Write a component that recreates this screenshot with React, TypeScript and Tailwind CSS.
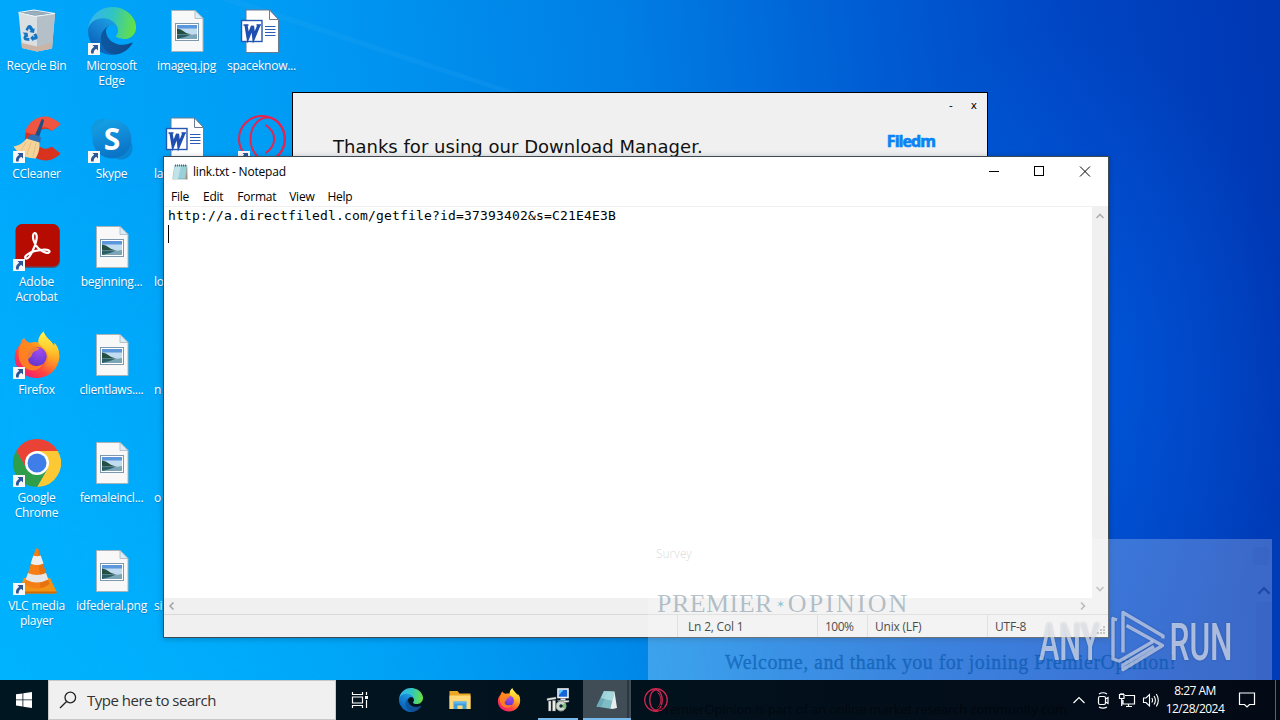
import React from "react";

type IconProps = { className?: string };

const ui = "font-['Open_Sans','Noto_Sans',sans-serif]";

function EdgeIcon({ className = "size-12" }: IconProps) {
  return (
    <svg viewBox="0 0 256 256" className={className}>
      <defs>
        <linearGradient id="edgeA" x1="60" y1="178" x2="240" y2="178" gradientUnits="userSpaceOnUse">
          <stop offset="0" stopColor="#0c59a4" />
          <stop offset="1" stopColor="#114a8b" />
        </linearGradient>
        <linearGradient id="edgeB" x1="150" y1="90" x2="45" y2="225" gradientUnits="userSpaceOnUse">
          <stop offset="0" stopColor="#1b9de2" />
          <stop offset="0.5" stopColor="#1580d0" />
          <stop offset="1" stopColor="#0a62b8" />
        </linearGradient>
        <linearGradient id="edgeC" x1="10" y1="70" x2="250" y2="120" gradientUnits="userSpaceOnUse">
          <stop offset="0" stopColor="#35b6ec" />
          <stop offset="0.45" stopColor="#2fc4c4" />
          <stop offset="1" stopColor="#66e23f" />
        </linearGradient>
      </defs>
      <path fill="url(#edgeA)" d="M231 190.5c-3.4 1.8-6.9 3.4-10.5 4.7a101.9 101.9 0 0 1-35.9 6.5c-47.3 0-88.5-32.5-88.5-74.3 0-11.4 6.4-21.9 16.4-27.3-42.8 1.8-53.8 46.4-53.8 72.5 0 73.9 68.1 81.4 82.8 81.4 7.9 0 19.8-2.3 27-4.6l1.3-.4a128.3 128.3 0 0 0 66.6-52.8 4 4 0 0 0-5.4-5.7z" />
      <path fill="url(#edgeB)" d="M105.7 241.4a79.2 79.2 0 0 1-22.7-21.3 80.7 80.7 0 0 1 29.5-120c3.2-1.5 8.5-4.1 15.6-4a32.4 32.4 0 0 1 25.7 13 31.9 31.9 0 0 1 6.3 18.7c0-.2 24.5-79.6-80-79.6-43.9 0-80 41.6-80 78.2a130.2 130.2 0 0 0 12.1 56 128 128 0 0 0 156.4 67.1 75.6 75.6 0 0 1-62.8-8z" />
      <path fill="url(#edgeC)" d="M152.3 148.9c-.9 1-3.4 2.5-3.4 5.6 0 2.6 1.7 5.2 4.8 7.3 14.4 10.1 41.7 8.8 41.8 8.8a59.6 59.6 0 0 0 30.3-8.4 61.4 61.4 0 0 0 30.4-52.9c.3-22.4-8-37.3-11.3-43.9C223.5 23.9 177.2 0 128 0A128 128 0 0 0 0 126.2c.5-36.5 36.8-66 80-66 3.5 0 23.5.3 42 10 16.3 8.6 24.9 18.9 30.8 29.2 6.2 10.7 7.3 24.1 7.3 29.5 0 5.3-2.7 13.3-7.8 19.9z" />
    </svg>
  );
}

function RecycleBinIcon() {
  return (
    <svg viewBox="0 0 48 48" className="size-12">
      <path d="M5.500 5.500 21 9.300 42 6.500 39 41.500 24 44.500 9 41z" fill="#dadfe2" />
      <path d="M24 9 42 6.500 39 41.500 24 44.500z" fill="#b5bfc8" />
      <path d="M8.700 36 24 39.500 39.300 36 39 41.500 24 44.500 9 41z" fill="#cbb3a5" />
      <path d="M5.500 5.500 21 3 42 6.500 22 9.300z" fill="#7c99ab" stroke="#eef5f9" strokeWidth="1.200" />
      <path d="M9 5.800 21 4.200 37 6.500 22 8z" fill="#9aaebb" />
      <g fill="#1374c4">
        <path d="M12.500 22.500l2-3.500q1.500-1.800 3.600-.6l2.400 3.600 1.300-.8-.8 4.800-4.800-1 1.500-1-1.700-2.500-1.700 2.700z" />
        <path d="M20.500 27.500l2.700-1.300 1.300 3q.8 3-2.200 3.500l-2 .1v1.700l-3.200-3.500 3.200-3v1.700h1.500z" />
        <path d="M9.700 25.500l4.800.3.800 4.500-1.300-.7-.7 1.200 3 .2v3l-3.500-.5q-3-1-2.100-3.800l.9-2z" />
      </g>
    </svg>
  );
}

function CCleanerIcon() {
  return (
    <svg viewBox="0 0 48 48" className="size-12">
      <path d="M47.500 9.500A20.500 21.500 0 1 0 47.500 38.500L38.500 31.500A9.500 10 0 1 1 38.500 16z" fill="#d9331f" />
      <path d="M47.500 9.500A20.500 21.500 0 0 0 12 17l10 3A9.500 10 0 0 1 38.500 16z" fill="#ef5541" />
      <path d="M28.500 4.500q2.200-.8 2.500 1.200L25.500 24l-4.500-1z" fill="#1f4f86" />
      <path d="M16 20.500q6-2.500 12 2l-1 6-13-3z" fill="#2b70b5" />
      <path d="M13.500 23.500 26.500 27.500Q27 37 22.500 43.500 12 43 6 38.500L.5 31.500Q9 30 13.500 23.500z" fill="#f4d49b" />
      <path d="M13 27 8 36M18 27l-4 13M23 28l-3 14" stroke="#e0b878" strokeWidth=".7" />
    </svg>
  );
}

function SkypeIcon() {
  return (
    <svg viewBox="0 0 48 48" className="size-12">
      <defs>
        <linearGradient id="skype" x1="0" y1="0" x2="0.300" y2="1">
          <stop offset="0" stopColor="#12a5e6" />
          <stop offset="0.450" stopColor="#128fdb" />
          <stop offset="1" stopColor="#0a74c6" />
        </linearGradient>
      </defs>
      <circle cx="14.500" cy="15.500" r="11.500" fill="#1198de" />
      <circle cx="33" cy="33" r="11.500" fill="#0a85d4" />
      <circle cx="24" cy="24" r="19.500" fill="url(#skype)" />
      <text x="24" y="34.500" textAnchor="middle" fontSize="30" fontWeight="700" fill="#fff" fontFamily="Open Sans">S</text>
    </svg>
  );
}

function AcrobatIcon() {
  return (
    <svg viewBox="0 0 48 48" className="size-12">
      <rect x="3" y="2" width="44" height="43" rx="6.500" fill="#7d2420" opacity=".6" />
      <rect x="2.500" y="1" width="44" height="42.500" rx="6.500" fill="#b60b00" />
      <path d="M13 35.500c-3-1.500 2.500-6 9-7.500 6.500-1.600 14-2.300 14.500.2.500 3-6.500 1.800-11.500-3.200-4-4-6-11-4.500-14 1.500-2.600 4 0 3 5.500C22.500 23.500 16 37 13 35.500z" fill="none" stroke="#fff" strokeWidth="2.200" strokeLinejoin="round" />
    </svg>
  );
}

function FirefoxIcon({ className = "size-12" }: IconProps) {
  return (
    <svg viewBox="0 0 48 48" className={className}>
      <defs>
        <linearGradient id="ffBody" x1="0.850" y1="0.100" x2="0.200" y2="0.950">
          <stop offset="0" stopColor="#ffe226" />
          <stop offset="0.350" stopColor="#ff9a1f" />
          <stop offset="0.700" stopColor="#ff4541" />
          <stop offset="1" stopColor="#f01c74" />
        </linearGradient>
        <linearGradient id="ffTail" x1="0.500" y1="0" x2="0.500" y2="1">
          <stop offset="0" stopColor="#fff44f" />
          <stop offset="0.500" stopColor="#ffc42a" />
          <stop offset="1" stopColor="#ff7a2a" stopOpacity="0" />
        </linearGradient>
        <radialGradient id="ffGlobe" cx="0.600" cy="0.200" r="0.900">
          <stop offset="0" stopColor="#a04bf0" />
          <stop offset="1" stopColor="#5b35c8" />
        </radialGradient>
      </defs>
      <path d="M30.500.500c-3 3-5.500 6.500-4.500 11-3-.8-6-.8-8.500.2-3-.3-5-2-6.500-4.700C8.500 8.700 7.500 11 7.600 13.200 3.500 17 1.500 21.500 1.700 27 2.200 38.500 12 47 24 47s22-9.500 22.300-21.500c.1-5.500-1.800-10.800-5-13.500l.3 3.500C38.500 9.500 32.500 7 30.500.5z" fill="url(#ffBody)" />
      <path d="M30.500.500c-3.500 4-7.500 9.500-3.500 13.500 6 4.500 9.500 9 8 15-1.500 7-7 10-13 10 12 5 23-2 24.200-13 .2-5.500-1.700-11-4.900-14l.3 3.500C38.500 9.500 32.500 7 30.500.5z" fill="url(#ffTail)" />
      <circle cx="24" cy="25.500" r="9.700" fill="url(#ffGlobe)" />
      <path d="M7.600 13.200c4-2 8-2 10.700.2 2.500 2 6 2.600 8.200 3.600-1 2.500-5 3-6.500 4.500-1.200 1.300-.5 3.500-3 5-2.500 1.300-2.500 4.300 0 6.500 3 3 9 2.500 12 .5C27 39 20 41 14 38 5.500 34 3.500 22 7.600 13.200z" fill="#ff8a1c" opacity=".85" />
    </svg>
  );
}

function ChromeIcon() {
  return (
    <svg viewBox="0 0 48 48" className="size-12">
      <path d="M3.200 12A24 24 0 0 1 44.800 12H24L13.600 30z" fill="#ea4335" />
      <path d="M44.800 12A24 24 0 0 1 24 48L34.400 30 24 12z" fill="#fcc934" />
      <path d="M24 48A24 24 0 0 1 3.200 12L13.600 30h20.800z" fill="#2f9e4b" />
      <circle cx="24" cy="24" r="12" fill="#fff" />
      <circle cx="24" cy="24" r="9.500" fill="#3f7ee8" />
    </svg>
  );
}

function VlcIcon() {
  return (
    <svg viewBox="0 0 48 48" className="size-12">
      <path d="M11 31h26l6.500 13.500q.5 2-1.500 2H7q-2 0-1.500-2z" fill="#f39316" />
      <path d="M5.300 44.500h38.300q.5 2-1.600 2H7q-2.200 0-1.700-2z" fill="#cf6a05" />
      <path d="M22.500 2.500q1.500-2.500 3 0L36.500 37q-12 9-25 0z" fill="#f57f14" />
      <path d="M25 1.500 36.500 37q-4 3-9 4z" fill="#d9630a" opacity=".5" />
      <path d="M20.300 8.500q3.700 1.600 7.400 0L30.500 16.500q-6.500 3-12.800 0z" fill="#efefef" />
      <path d="M15 26q9 4 18 0l2.300 6.500q-11.500 6-22.700 0z" fill="#e6e6e6" />
    </svg>
  );
}

function OperaIcon({ className = "size-12" }: IconProps) {
  return (
    <svg viewBox="0 0 48 48" className={className} fill="none" stroke="#ef2a5a">
      <circle cx="24" cy="24" r="22.500" strokeWidth="2.600" />
      <ellipse cx="24" cy="24" rx="12.500" ry="20.500" strokeWidth="2.800" />
      <path d="M27 9C36 16 36 32 27 39" strokeWidth="2" />
    </svg>
  );
}

function OperaDesktopIcon() {
  return (
    <svg viewBox="0 0 48 48" className="size-12" fill="none" stroke="#e5244f">
      <circle cx="24" cy="24" r="23" strokeWidth="2" />
      <ellipse cx="29.500" cy="24" rx="17" ry="21.500" strokeWidth="1.900" />
      <path d="M27.500 10C39 17 39 31 27.500 38" strokeWidth="2" />
    </svg>
  );
}

function ImageFileIcon() {
  return (
    <svg viewBox="0 0 48 48" className="size-12">
      <path d="M8.500 3.500h23.500l8 8v33H8.500z" fill="#f8f8f8" stroke="#a9b4ba" />
      <path d="M32 3.500v8h8z" fill="#d9eef8" stroke="#a9b4ba" strokeWidth=".8" />
      <rect x="12.500" y="16.500" width="23" height="17" fill="#fff" stroke="#7e98ad" />
      <rect x="14" y="18" width="20" height="5" fill="#5b97dc" />
      <rect x="14" y="21.500" width="20" height="5.500" fill="#c1dcf1" />
      <path d="M14 21.500q4 .5 7 3t9 3H14z" fill="#244f42" />
      <path d="M14 27q9 1 20 0v5H14z" fill="#7ba6b8" />
      <path d="M14 27.500h14l-6 2.500-8 2z" fill="#2d5d64" />
    </svg>
  );
}

function WordFileIcon() {
  return (
    <svg viewBox="0 0 48 48" className="size-12">
      <path d="M8 3h23.500l9 9.500V45.500H8z" fill="#fff" stroke="#6b7b8f" />
      <path d="M31.500 3v9.500h9z" fill="#fff" stroke="#6b7b8f" />
      <path d="M27 19.500h10.500M27 22.500h10.500M27 25.500h10.500M27 28.500h10.500" stroke="#2b5db8" />
      <rect x="3.500" y="13.500" width="20.500" height="21" fill="#fff" stroke="#2458b5" strokeWidth="1.400" />
      <path d="M8 18l2 12.500L14.500 19l1.300 11.500L21 18" fill="none" stroke="#1f4fb0" strokeWidth="3.200" />
      <path d="M5.500 18h5M18.500 18h4.500" stroke="#1f4fb0" strokeWidth="1.500" />
    </svg>
  );
}

function NotepadIcon({ className = "size-4" }: IconProps) {
  return (
    <svg viewBox="0 0 16 16" className={className}>
      <path d="M2.800 1.500h12L13.800 15H.8z" fill="#9bd0d8" stroke="#6f98a3" strokeWidth=".6" />
      <path d="M2.800 1.500H9L6 15H.8z" fill="#bfe3e8" />
      <path d="M13.500 15.500H15.500L15.300 2" fill="#a08c78" />
      <path d="M3.500 .5v2M5.500 .5v2M7.500 .5v2M9.500 .5v2M11.500 .5v2M13.500 .5v2" stroke="#4d6268" strokeWidth="1" />
    </svg>
  );
}

function ShortcutBadge() {
  return (
    <svg viewBox="0 0 12 12" className="absolute bottom-0 left-0 size-3">
      <rect width="12" height="12" fill="#f7f7f7" />
      <path d="M4.500 2h5.500v5.500L8.200 5.700Q5.300 7.500 5.700 10.500H3.200Q2 6.500 6.200 3.700z" fill="#2b5797" />
    </svg>
  );
}

type Item = { icon: React.ReactNode; label: string[]; shortcut?: boolean; cut?: boolean };

const image = <ImageFileIcon />;
const word = <WordFileIcon />;

const columns: (Item | null)[][] = [
  [
    { icon: <RecycleBinIcon />, label: ["Recycle Bin"] },
    { icon: <CCleanerIcon />, label: ["CCleaner"], shortcut: true },
    { icon: <AcrobatIcon />, label: ["Adobe", "Acrobat"], shortcut: true },
    { icon: <FirefoxIcon />, label: ["Firefox"], shortcut: true },
    { icon: <ChromeIcon />, label: ["Google", "Chrome"], shortcut: true },
    { icon: <VlcIcon />, label: ["VLC media", "player"], shortcut: true },
  ],
  [
    { icon: <EdgeIcon />, label: ["Microsoft", "Edge"], shortcut: true },
    { icon: <SkypeIcon />, label: ["Skype"], shortcut: true },
    { icon: image, label: ["beginning..."] },
    { icon: image, label: ["clientlaws...."] },
    { icon: image, label: ["femaleincl..."] },
    { icon: image, label: ["idfederal.png"] },
  ],
  [
    { icon: image, label: ["imageq.jpg"] },
    { icon: word, label: ["la"], cut: true },
    { icon: null, label: ["lo"], cut: true },
    { icon: null, label: ["n"], cut: true },
    { icon: null, label: ["o"], cut: true },
    { icon: null, label: ["si"], cut: true },
  ],
  [
    { icon: word, label: ["spaceknow..."] },
    { icon: <OperaDesktopIcon />, label: [], shortcut: true },
  ],
];

function DesktopIcon({ item }: { item: Item }) {
  return (
    <div className="flex h-[108px] w-[75px] flex-col items-center pt-[7px] pr-[2px]">
      <div className="relative size-12 shrink-0">
        {item.icon}
        {item.shortcut && <ShortcutBadge />}
      </div>
      <div className={`mt-[3px] w-full text-[12px] leading-[15px] tracking-[-0.250px] whitespace-nowrap text-white [text-shadow:0_1px_1px_rgb(0_40_90/0.35)] ${item.cut ? "pl-[4px] text-left" : "flex flex-col items-center"}`}>
        {item.label.map((line) => (
          <div key={line}>{line}</div>
        ))}
      </div>
    </div>
  );
}

function Wallpaper() {
  return (
    <svg viewBox="0 0 1280 720" className="absolute inset-0 h-[720px] w-[1280px]">
      <defs>
        <linearGradient id="sky" x1="0" y1="240" x2="1280" y2="100" gradientUnits="userSpaceOnUse">
          <stop offset="0" stopColor="#00a9fc" />
          <stop offset="0.220" stopColor="#009df5" />
          <stop offset="0.500" stopColor="#007ee4" />
          <stop offset="0.680" stopColor="#005ed4" />
          <stop offset="0.840" stopColor="#0046c4" />
          <stop offset="1" stopColor="#0037b3" />
        </linearGradient>
        <linearGradient id="lift" x1="0" y1="0" x2="0" y2="1">
          <stop offset="0.200" stopColor="#00b8ff" stopOpacity="0" />
          <stop offset="1" stopColor="#00b8ff" stopOpacity="0.700" />
        </linearGradient>
        <linearGradient id="fade" x1="0" y1="0" x2="1" y2="0">
          <stop offset="0" stopColor="#fff" />
          <stop offset="0.600" stopColor="#000" />
        </linearGradient>
        <radialGradient id="glow" cx="1060" cy="370" r="230" gradientTransform="translate(0 -180) scale(1 1.500)" gradientUnits="userSpaceOnUse">
          <stop offset="0" stopColor="#0062ea" stopOpacity="0.600" />
          <stop offset="1" stopColor="#0062ea" stopOpacity="0" />
        </radialGradient>
        <mask id="leftHalf">
          <rect width="1280" height="720" fill="url(#fade)" />
        </mask>
      </defs>
      <rect width="1280" height="720" fill="url(#sky)" />
      <rect width="1280" height="720" fill="url(#lift)" mask="url(#leftHalf)" />
      <rect width="1280" height="720" fill="url(#glow)" />
      <path d="M240 0 520 93H505L220 0z" fill="#3fb4f7" opacity=".12" />
    </svg>
  );
}

function DownloadManager() {
  return (
    <section className="absolute top-[92px] left-[292px] flex h-[120px] w-[696px] flex-col border border-black bg-[#f0f0f0] font-['DejaVu_Sans',sans-serif] text-black">
      <div className="flex h-[26px] items-center justify-end gap-[17px] pr-[10px] text-[10.500px]">
        <span className="pr-px">-</span>
        <span>x</span>
      </div>
      <div className="flex items-start justify-between pr-[52px] pl-[40px]">
        <h1 className="mt-[15px] text-[18px] leading-[26px] tracking-[0.020px] whitespace-nowrap text-[#111]">Thanks for using our Download Manager.</h1>
        <span className="mt-[12px] font-['Open_Sans',sans-serif] text-[16px] leading-[20px] font-bold tracking-[-0.950px] text-[#0a84f5] [-webkit-text-stroke:0.7px_#0a84f5]">Filedm</span>
      </div>
    </section>
  );
}

function Chevron({ d, className }: { d: string; className: string }) {
  return (
    <svg viewBox="0 0 10 10" className={className} fill="none" stroke="currentColor" strokeWidth="1.600">
      <path d={d} />
    </svg>
  );
}

function Notepad() {
  return (
    <section className={`absolute top-[156px] left-[163px] flex h-[482px] w-[946px] flex-col border border-[#3b4a55] bg-white text-[12px] text-black shadow-[0_1px_6px_rgb(0_0_0/0.25)] ${ui}`}>
      <header className="flex h-[29px] shrink-0 items-center pl-[8px]">
        <NotepadIcon />
        <span className="ml-[5px] grow text-[12px] tracking-[-0.200px]">link.txt - Notepad</span>
        <svg viewBox="0 0 136 28" className="h-7 w-[136px]" fill="none" stroke="#000" shapeRendering="crispEdges">
          <path d="M17 13.500h10" />
          <rect x="62.500" y="8.500" width="9" height="9" />
          <path d="M108 8.500l10 10M118 8.500l-10 10" shapeRendering="auto" />
        </svg>
      </header>
      <nav className="flex h-[21px] shrink-0 items-center gap-[14px] border-b border-[#f0f0f0] pt-[2px] pl-[7px] tracking-[-0.250px]">
        <span>File</span>
        <span>Edit</span>
        <span>Format</span>
        <span className="-ml-px">View</span>
        <span className="-ml-px">Help</span>
      </nav>
      <div className="flex grow">
        <div className="grow pl-[4px] font-['DejaVu_Sans_Mono',monospace] text-[13px] leading-[18px] tracking-[0.173px] whitespace-pre">
          http://a.directfiledl.com/getfile?id=37393402&amp;s=C21E4E3B
          <div className="ml-0 h-[18px] w-px bg-black" />
        </div>
        <div className="flex w-[16px] flex-col items-center justify-between bg-[#f0f0f0] py-[4px] text-[#b0b0b0]">
          <Chevron d="M1.500 7 5 3.500 8.500 7" className="size-[10px]" />
          <Chevron d="M1.500 3 5 6.500 8.500 3" className="size-[10px]" />
        </div>
      </div>
      <div className="flex h-[16px] shrink-0 items-center justify-between bg-[#f0f0f0] pr-[20px] pl-[3px] text-[#a5a5a5]">
        <Chevron d="M6.500 1.500 3 5 6.500 8.500" className="size-[10px]" />
        <Chevron d="M3 1.500 6.500 5 3 8.500" className="size-[10px]" />
      </div>
      <footer className="flex h-[23px] shrink-0 items-stretch border-t border-[#d9d9d9] bg-[#f0f0f0] leading-[23px] tracking-[-0.200px] text-[#111]">
        <div className="grow" />
        <div className="w-[140px] border-l border-[#d7d7d7] pl-[10px]">Ln 2, Col 1</div>
        <div className="w-[50px] border-l border-[#d7d7d7] pl-[7px] tracking-[-0.500px]">100%</div>
        <div className="w-[120px] border-l border-[#d7d7d7] pl-[7px]">Unix (LF)</div>
        <div className="flex w-[121px] items-start justify-between border-l border-[#d7d7d7] pr-[2px] pl-[7px]">
          <span>UTF-8</span>
          <svg viewBox="0 0 10 10" className="mb-[2px] size-[10px] self-end" fill="#b5b5b5">
            <path d="M7 1h2v2H7zM4 4h2v2H4zM7 4h2v2H7zM1 7h2v2H1zM4 7h2v2H4zM7 7h2v2H7z" />
          </svg>
        </div>
      </footer>
    </section>
  );
}

function SurveyGhost() {
  return (
    <section className="absolute top-[539px] left-[648px] flex h-[141px] w-[624px] overflow-hidden bg-white/23">
      <div className="flex grow flex-col pl-[8px]">
        <span className={`mt-[6px] text-[12px] leading-[18px] tracking-[-0.300px] text-black/12 ${ui}`}>Survey</span>
        <div className="mt-[26px] flex items-center pl-px font-['Liberation_Serif',serif] text-[26px] leading-[30px] whitespace-nowrap text-[#33566b]/35">
          <span className="tracking-[0.450px]">PREMIER</span>
          <span className="mx-[3px] text-[11px] text-[#2a9fc4]/50">✶</span>
          <span className="tracking-[2.100px]">OPINION</span>
        </div>
        <p className="mt-[29px] pl-[69px] font-['Liberation_Serif',serif] text-[20px] leading-[28px] tracking-[0.450px] whitespace-nowrap text-[#0053a8]/55 [-webkit-text-stroke:0.4px_rgb(0_83_168/0.5)]">
          Welcome, and thank you for joining PremierOpinion!
        </p>
      </div>
      <div className="flex w-[16px] flex-col items-center pt-[45px] text-[#10309a]/60">
        <Chevron d="M1 7 5 3 9 7" className="size-[14px]" />
        <div className="mt-[4px] w-full grow bg-[#2b50b8]/15" />
      </div>
      <div className="absolute top-[8px] right-[3px] h-[18px] w-[16px] rounded-sm bg-[#2b50b8]/15" />
    </section>
  );
}

function Watermark() {
  return (
    <svg viewBox="0 0 200 70" className="absolute top-[605px] left-[1036px] h-[70px] w-[200px] drop-shadow-[0_0_1px_rgb(0_0_0/0.3)]">
      <g fill="#e6ebf5" fillOpacity=".68" fontFamily="Roboto" fontSize="51" fontWeight="500">
        <text x="3" y="54.500" textLength="60.500" lengthAdjust="spacingAndGlyphs">ANY</text>
        <text x="133.500" y="54.500" textLength="63" lengthAdjust="spacingAndGlyphs">RUN</text>
      </g>
      <g fill="none" stroke="#ccd6ee" strokeOpacity=".72" strokeWidth="3.400" strokeLinejoin="round">
        <path d="M87 47.500V7.500L127 31V33.500" />
        <path d="M90.500 20.500 126.500 40.500 87 64.500V60L118 41.500" />
        <path d="M81 15 77 13.500V54L83 56 87 54 117 36.500" />
      </g>
    </svg>
  );
}

function TaskButton({ children, running, active }: { children: React.ReactNode; running?: boolean; active?: boolean }) {
  return (
    <div className={`relative mr-px flex w-12 shrink-0 items-center justify-center ${active ? "bg-[#404d56]" : ""}`}>
      {children}
      {active && <div className="absolute inset-y-0 right-[2px] w-[2px] bg-[#2b3841]" />}
      {running && <div className={`absolute bottom-0 h-[2px] bg-[#76b9ed] ${active ? "left-0 w-12" : "left-[4px] w-10"}`} />}
    </div>
  );
}

function Taskbar() {
  return (
    <footer className={`absolute bottom-0 left-0 flex h-[40px] w-[1280px] bg-linear-to-r from-[#001722] via-[#02121d] to-[#030a16] text-white ${ui}`}>
      <div className="flex w-12 items-center justify-center">
        <svg viewBox="0 0 16 16" className="size-4" fill="#fff">
          <path d="M0 2.300 6.500 1.400V7.500H0zM7.300 1.300 16 0V7.500H7.300zM0 8.300H6.500V14.500L0 13.600zM7.300 8.300H16V16L7.300 14.700z" />
        </svg>
      </div>
      <div className="flex w-[288px] items-center border border-[#c8c8c8] bg-[#f0f0f0] pl-[10px] text-[#333]">
        <svg viewBox="0 0 18 18" className="size-[18px]" fill="none" stroke="#222" strokeWidth="1.300">
          <circle cx="11.300" cy="6.500" r="5.300" />
          <path d="M7.600 10.500 1 17" />
        </svg>
        <span className="ml-[10px] text-[15px] tracking-[-0.480px]">Type here to search</span>
      </div>
      <TaskButton>
        <svg viewBox="0 0 18 18" className="size-[18px]" fill="none" stroke="#fff" strokeWidth="1.200">
          <path d="M1.500 1v2.500h10V1M1.500 17v-2.500h10V17M1.500 6h10v6h-10zM15.500 1v3M15.500 9v8" />
          <path d="M14 5h3v3h-3z" fill="#fff" stroke="none" />
        </svg>
      </TaskButton>
      <div className="flex pl-[2px]">
        <TaskButton><EdgeIcon className="size-6" /></TaskButton>
        <TaskButton>
          <svg viewBox="0 0 24 24" className="size-6">
            <path d="M1.500 3h8l2 2.500h11V21h-21z" fill="#e9a825" />
            <path d="M1.500 7.500h21V21h-21z" fill="#ffd977" />
            <path d="M5.500 21v-7.500h13V21h-4v-3.500h-5V21z" fill="#3f9fdd" />
            <path d="M5.500 13.500h13v2h-13z" fill="#63b9ee" />
          </svg>
        </TaskButton>
        <TaskButton><FirefoxIcon className="size-6" /></TaskButton>
        <TaskButton running>
          <svg viewBox="0 0 24 24" className="size-6">
            <rect x="12" y="1" width="10" height="8.500" fill="#1463d8" stroke="#f2f4f6" strokeWidth="1.600" />
            <path d="M13 2h4.500L13 7z" fill="#5ad0ff" />
            <path d="M14.500 10.500h5v2h-5z" fill="#dcdcdc" />
            <path d="M1 10.500 10 9v2l-9 1.500zM2.500 13h2.500v10H2.500zM6.500 12.500h3v10.500h-3zM11 12.500h12v1.500l-4 .5z" fill="#ecece8" stroke="#7c8180" strokeWidth=".4" />
            <circle cx="15" cy="18" r="5" fill="#cfd9cf" stroke="#8d9a90" />
            <path d="M15 18 19 15a5 5 0 0 1 0 6z" fill="#79c37b" />
            <circle cx="15" cy="18" r="1.700" fill="#10252e" />
          </svg>
        </TaskButton>
        <TaskButton running active>
          <svg viewBox="0 0 24 24" className="size-6">
            <path d="M9 3 19.500 3.500 16.500 21 1.500 18.500z" fill="#7fbcc6" />
            <path d="M9 3 13 3.200 6 19.200 1.500 18.500z" fill="#6aabb7" />
            <path d="M19.500 3.500 22 20 17.500 21 15.500 20.500z" fill="#e6edee" />
            <path d="M9 3 19.500 3.500 17.500 13 6 10z" fill="#b5e2e7" opacity=".7" />
          </svg>
        </TaskButton>
        <TaskButton><OperaIcon className="size-6 opacity-85" /></TaskButton>
      </div>
      <div className="grow" />
      <span className="absolute bottom-[2px] left-[657px] text-[13px] leading-[18px] tracking-[-0.120px] whitespace-nowrap text-black/50">
        PremierOpinion is part of an online market research community com
      </span>
      <div className="relative flex shrink-0 items-center gap-[6px]">
        <svg viewBox="0 0 18 18" className="size-[18px]" fill="none" stroke="#fff" strokeWidth="1.200"><path d="M3.500 12 9 6.500 14.500 12" /></svg>
        <svg viewBox="0 0 18 18" className="size-[18px]" fill="none" stroke="#fff" strokeWidth="1.200">
          <rect x="4.500" y="5.500" width="7" height="8" rx="1.500" />
          <path d="M11.500 8 14 6.500v6l-2.500-1.500M5 3Q9 .5 13 3M5 16Q9 18.300 13 16" />
        </svg>
        <svg viewBox="0 0 18 18" className="size-[18px]" fill="none" stroke="#fff" strokeWidth="1.200">
          <path d="M7 4.500h9.500v8.500H5V9M8 15.500h6M10.500 13v2.500M1.500 3.500h4.500v4H1.500zM3.700 7.500v7.500M3 3.500V2M5 3.500V2" />
        </svg>
        <svg viewBox="0 0 18 18" className="size-[18px]" fill="none" stroke="#fff" strokeWidth="1.100">
          <path d="M1.500 7v4.500H4l3.500 3.500V3.500L4 7zM9.800 7Q11.300 9.200 9.800 11.500M12 5Q14.800 9.200 12 13.500M14.300 3Q18.300 9.200 14.300 15.500" />
        </svg>
      </div>
      <div className="flex w-[70px] shrink-0 flex-col items-center justify-center text-[12px] leading-[18px] tracking-[-0.500px] whitespace-nowrap">
        <span>8:27 AM</span>
        <span>12/28/2024</span>
      </div>
      <div className="flex w-[34px] shrink-0 items-center justify-center">
        <svg viewBox="0 0 18 18" className="size-[18px]" fill="none" stroke="#fff" strokeWidth="1.200"><path d="M1.500 2h15v11.500h-5L9 16l-2.500-2.500h-5z" /></svg>
      </div>
      <div className="w-[16px] shrink-0 pl-[11px]"><div className="h-full w-px bg-[#5b636c]" /></div>
    </footer>
  );
}

export default function App() {
  return (
    <main className={`relative h-[720px] w-[1280px] overflow-hidden ${ui}`}>
      <Wallpaper />
      <div className="relative flex">
        {columns.map((column, i) => (
          <div key={i} className="flex flex-col">
            {column.map((item, j) => item && <DesktopIcon key={j} item={item} />)}
          </div>
        ))}
      </div>
      <DownloadManager />
      <Notepad />
      <SurveyGhost />
      <Taskbar />
      <Watermark />
    </main>
  );
}
